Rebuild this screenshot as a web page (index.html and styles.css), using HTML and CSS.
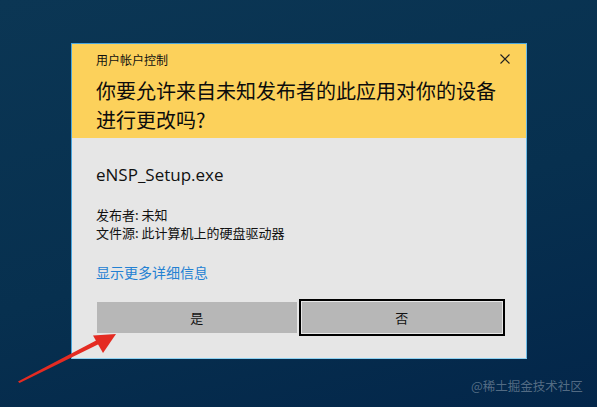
FILE: index.html
```html
<!DOCTYPE html>
<html lang="zh">
<head>
<meta charset="utf-8">
<link rel="stylesheet" href="styles.css">
</head>
<body>
<div class="desktop">
  <div class="dialog">
    <div class="header">
      <div class="title-row">
        <span class="title">用户帐户控制</span>
        <svg class="close" width="10" height="10" viewBox="0 0 10 10"><path d="M0.5 0.5L9.5 9.5M9.5 0.5L0.5 9.5" stroke="#222" stroke-width="1.1" fill="none"/></svg>
      </div>
      <div class="question">你要允许来自未知发布者的此应用对你的设备<br>进行更改吗?</div>
    </div>
    <div class="body">
      <div class="program">eNSP_Setup.exe</div>
      <div class="meta">
        <div>发布者: 未知</div>
        <div>文件源: 此计算机上的硬盘驱动器</div>
      </div>
      <div class="details">显示更多详细信息</div>
      <div class="buttons">
        <button class="btn">是</button>
        <button class="btn focused">否</button>
      </div>
    </div>
  </div>
  <svg class="arrow" width="130" height="100" viewBox="0 0 130 100">
    <polygon points="18,81.5 98,39.5 100,43.5 19.5,83" fill="#e42b22"/>
    <polygon points="93,35.5 116,34 103,53" fill="#e42b22"/>
  </svg>
  <div class="watermark">@稀土掘金技术社区</div>
</div>
</body>
</html>
```
FILE: styles.css
```css
html, body {
  margin: 0;
  padding: 0;
}
body {
  font-family: "Noto Sans", "Noto Sans CJK SC", sans-serif;
  color: #111;
}
.desktop {
  position: relative;
  width: 597px;
  height: 407px;
  overflow: hidden;
  background: linear-gradient(165deg, #0b3654 0%, #07304f 55%, #03264a 100%);
  padding: 43px 0 0 71px;
  box-sizing: border-box;
}
.dialog {
  width: 456px;
  box-sizing: border-box;
  border: 1px solid #4aa6dd;
  border-bottom-color: #8ed2f2;
  border-right-color: #6cbce8;
  background: #e6e6e6;
}
.header {
  background: #fcd15b;
  padding: 8px 16px 4px 24px;
}
.title-row {
  display: flex;
  justify-content: space-between;
  align-items: center;
  height: 16px;
}
.title {
  font-size: 12px;
  line-height: 16px;
  font-family: "Noto Sans CJK SC", sans-serif;
}
.close {
  display: block;
  margin-top: -3px;
}
.question {
  margin-top: 8px;
  font-size: 20px;
  line-height: 29px;
  font-family: "Noto Sans CJK SC", sans-serif;
  color: #0c0c0c;
}
.body {
  padding: 26px 24px 25px 24px;
}
.program {
  font-size: 17px;
  line-height: 22px;
  font-family: "Open Sans", "Noto Sans CJK SC", sans-serif;
}
.meta {
  margin-top: 20px;
  font-size: 13px;
  line-height: 18px;
  font-family: "Noto Sans CJK SC", sans-serif;
}
.details {
  margin-top: 20px;
  font-size: 14px;
  line-height: 20px;
  color: #2381d3;
  font-family: "Noto Sans CJK SC", sans-serif;
}
.buttons {
  margin-top: 20px;
  margin-left: 1px;
  display: flex;
  gap: 5px;
}
.btn {
  width: 200px;
  height: 31px;
  border: none;
  margin: 0;
  padding: 0;
  background: #b7b7b7;
  font-family: "Noto Sans CJK SC", sans-serif;
  font-size: 13px;
  color: #111;
}
.btn.focused {
  width: 201px;
  outline: 2px solid #000;
  outline-offset: 1px;
}
.arrow {
  position: absolute;
  left: 0;
  top: 300px;
}
.watermark {
  position: absolute;
  left: 471px;
  top: 377px;
  font-size: 12.5px;
  line-height: 17px;
  color: rgba(255, 255, 255, 0.33);
  font-family: "Noto Sans CJK SC", sans-serif;
}
```
